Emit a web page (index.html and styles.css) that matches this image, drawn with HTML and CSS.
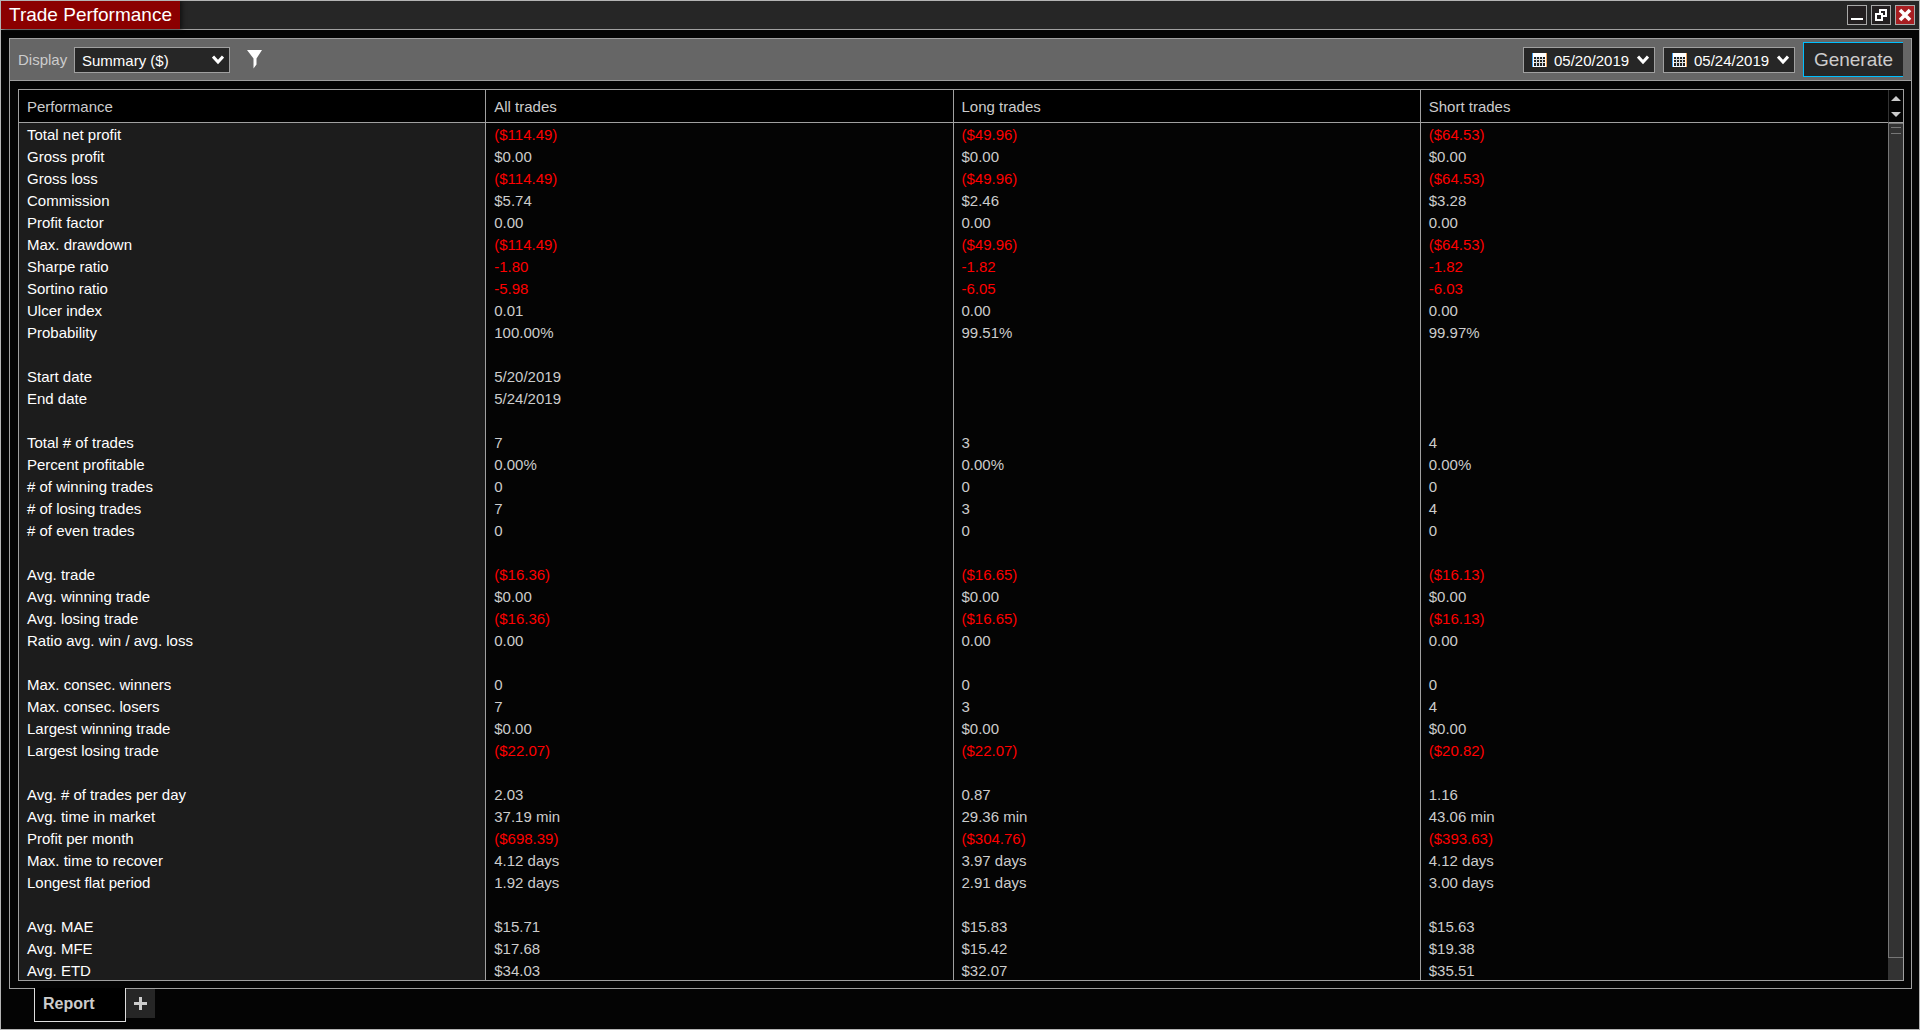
FILE: index.html
```html
<!DOCTYPE html>
<html lang="en">
<head>
  <meta charset="UTF-8">
  <title>Trade Performance</title>
  <link rel="stylesheet" href="styles.css">
</head>
<body>

<header class="titlebar">
  <h1>Trade Performance</h1>
  <div class="window-buttons">
    <button type="button" aria-label="Minimize">
      <svg width="18" height="18" viewBox="0 0 18 18"><rect x="3" y="12" width="12" height="2" fill="#fff"/></svg>
    </button>
    <button type="button" aria-label="Restore">
      <svg width="18" height="18" viewBox="0 0 18 18" fill="none" stroke="#fff" stroke-width="2"><path d="M8 7V4h6v6h-3" /><rect x="4" y="8" width="6" height="6"/></svg>
    </button>
    <button type="button" class="close" aria-label="Close">
      <svg width="18" height="18" viewBox="0 0 18 18" stroke="#fff" stroke-width="3.6"><path d="M4 4l10 10M14 4L4 14"/></svg>
    </button>
  </div>
</header>

<main class="panel">
  <div class="toolbar">
    <label for="display">Display</label>
    <div class="dropdown display">
      <select id="display">
        <option>Summary ($)</option>
      </select>
      <svg class="chevron" width="12" height="10" viewBox="0 0 12 10"><path d="M1 1.500L6 7L11 1.500" fill="none" stroke="#fff" stroke-width="3"/></svg>
    </div>
    <button type="button" class="filter" aria-label="Filter">
      <svg width="16" height="19" viewBox="0 0 16 19"><path d="M0 0h15L9.500 8.500v6L6.500 18.500v-10z" fill="#fff"/></svg>
    </button>

    <div class="dates">
      <div class="dropdown date">
        <svg class="calendar" width="15" height="14" viewBox="0 0 15 14">
          <path d="M0 0h15v14H0z" fill="#fff"/>
          <path d="M.5 0v14" stroke="#3b9cf0"/><path d="M14.500 0v14" stroke="#f0a050"/>
          <path d="M2 4h11v9H2z" fill="#222"/>
          <path d="M2 6.500h11M2 9.500h11" stroke="#f4e6cc"/>
          <path d="M4.500 4v9M7.500 4v9M10.500 4v9" stroke="#cfe0f4"/>
        </svg>
        <select aria-label="Start date">
          <option>05/20/2019</option>
        </select>
        <svg class="chevron" width="12" height="10" viewBox="0 0 12 10"><path d="M1 1.500L6 7L11 1.500" fill="none" stroke="#fff" stroke-width="3"/></svg>
      </div>
      <div class="dropdown date">
        <svg class="calendar" width="15" height="14" viewBox="0 0 15 14">
          <path d="M0 0h15v14H0z" fill="#fff"/>
          <path d="M.5 0v14" stroke="#3b9cf0"/><path d="M14.500 0v14" stroke="#f0a050"/>
          <path d="M2 4h11v9H2z" fill="#222"/>
          <path d="M2 6.500h11M2 9.500h11" stroke="#f4e6cc"/>
          <path d="M4.500 4v9M7.500 4v9M10.500 4v9" stroke="#cfe0f4"/>
        </svg>
        <select aria-label="End date">
          <option>05/24/2019</option>
        </select>
        <svg class="chevron" width="12" height="10" viewBox="0 0 12 10"><path d="M1 1.500L6 7L11 1.500" fill="none" stroke="#fff" stroke-width="3"/></svg>
      </div>
      <button type="button" class="generate">Generate</button>
    </div>
  </div>

  <div class="report">
    <div class="grid">
      <table>
        <thead>
          <tr><th>Performance</th><th>All trades</th><th>Long trades</th><th>Short trades</th></tr>
        </thead>
        <tbody>
          <tr><td>Total net profit</td><td class="neg">($114.49)</td><td class="neg">($49.96)</td><td class="neg">($64.53)</td></tr>
          <tr><td>Gross profit</td><td>$0.00</td><td>$0.00</td><td>$0.00</td></tr>
          <tr><td>Gross loss</td><td class="neg">($114.49)</td><td class="neg">($49.96)</td><td class="neg">($64.53)</td></tr>
          <tr><td>Commission</td><td>$5.74</td><td>$2.46</td><td>$3.28</td></tr>
          <tr><td>Profit factor</td><td>0.00</td><td>0.00</td><td>0.00</td></tr>
          <tr><td>Max. drawdown</td><td class="neg">($114.49)</td><td class="neg">($49.96)</td><td class="neg">($64.53)</td></tr>
          <tr><td>Sharpe ratio</td><td class="neg">-1.80</td><td class="neg">-1.82</td><td class="neg">-1.82</td></tr>
          <tr><td>Sortino ratio</td><td class="neg">-5.98</td><td class="neg">-6.05</td><td class="neg">-6.03</td></tr>
          <tr><td>Ulcer index</td><td>0.01</td><td>0.00</td><td>0.00</td></tr>
          <tr><td>Probability</td><td>100.00%</td><td>99.51%</td><td>99.97%</td></tr>
          <tr><td></td><td></td><td></td><td></td></tr>
          <tr><td>Start date</td><td>5/20/2019</td><td></td><td></td></tr>
          <tr><td>End date</td><td>5/24/2019</td><td></td><td></td></tr>
          <tr><td></td><td></td><td></td><td></td></tr>
          <tr><td>Total # of trades</td><td>7</td><td>3</td><td>4</td></tr>
          <tr><td>Percent profitable</td><td>0.00%</td><td>0.00%</td><td>0.00%</td></tr>
          <tr><td># of winning trades</td><td>0</td><td>0</td><td>0</td></tr>
          <tr><td># of losing trades</td><td>7</td><td>3</td><td>4</td></tr>
          <tr><td># of even trades</td><td>0</td><td>0</td><td>0</td></tr>
          <tr><td></td><td></td><td></td><td></td></tr>
          <tr><td>Avg. trade</td><td class="neg">($16.36)</td><td class="neg">($16.65)</td><td class="neg">($16.13)</td></tr>
          <tr><td>Avg. winning trade</td><td>$0.00</td><td>$0.00</td><td>$0.00</td></tr>
          <tr><td>Avg. losing trade</td><td class="neg">($16.36)</td><td class="neg">($16.65)</td><td class="neg">($16.13)</td></tr>
          <tr><td>Ratio avg. win / avg. loss</td><td>0.00</td><td>0.00</td><td>0.00</td></tr>
          <tr><td></td><td></td><td></td><td></td></tr>
          <tr><td>Max. consec. winners</td><td>0</td><td>0</td><td>0</td></tr>
          <tr><td>Max. consec. losers</td><td>7</td><td>3</td><td>4</td></tr>
          <tr><td>Largest winning trade</td><td>$0.00</td><td>$0.00</td><td>$0.00</td></tr>
          <tr><td>Largest losing trade</td><td class="neg">($22.07)</td><td class="neg">($22.07)</td><td class="neg">($20.82)</td></tr>
          <tr><td></td><td></td><td></td><td></td></tr>
          <tr><td>Avg. # of trades per day</td><td>2.03</td><td>0.87</td><td>1.16</td></tr>
          <tr><td>Avg. time in market</td><td>37.19 min</td><td>29.36 min</td><td>43.06 min</td></tr>
          <tr><td>Profit per month</td><td class="neg">($698.39)</td><td class="neg">($304.76)</td><td class="neg">($393.63)</td></tr>
          <tr><td>Max. time to recover</td><td>4.12 days</td><td>3.97 days</td><td>4.12 days</td></tr>
          <tr><td>Longest flat period</td><td>1.92 days</td><td>2.91 days</td><td>3.00 days</td></tr>
          <tr><td></td><td></td><td></td><td></td></tr>
          <tr><td>Avg. MAE</td><td>$15.71</td><td>$15.83</td><td>$15.63</td></tr>
          <tr><td>Avg. MFE</td><td>$17.68</td><td>$15.42</td><td>$19.38</td></tr>
          <tr><td>Avg. ETD</td><td>$34.03</td><td>$32.07</td><td>$35.51</td></tr>
        </tbody>
      </table>
    </div>
    <div class="scrollbar">
      <div class="scroll-arrows">
        <svg width="10" height="5" viewBox="0 0 10 5"><path d="M5 0l5 5H0z" fill="#ccc"/></svg>
        <svg width="10" height="5" viewBox="0 0 10 5"><path d="M0 0h10L5 5z" fill="#ccc"/></svg>
      </div>
      <div class="track">
        <div class="thumb"></div>
      </div>
    </div>
  </div>
</main>

<nav class="tabs">
  <a href="#" class="tab">Report</a>
  <button type="button" class="add-tab" aria-label="Add tab">
    <svg width="13" height="13" viewBox="0 0 13 13"><path d="M6.500 0v13M0 6.500h13" stroke="#ccc" stroke-width="3"/></svg>
  </button>
</nav>

</body>
</html>
```
FILE: styles.css
```css
* { box-sizing: border-box; }
body {
  margin: 0;
  height: 100vh;
  display: flex;
  flex-direction: column;
  overflow: hidden;
  background: #040404;
  border: 1px solid #b4b4b4;
  color: #ccc;
  font-family: "Liberation Sans", Arial, sans-serif;
  font-size: 15px;
}
button, select {
  font-family: inherit;
  font-size: inherit;
  color: inherit;
  margin: 0;
  padding: 0;
  border: none;
  border-radius: 0;
  background: none;
}
svg { display: block; }

/* title bar */
.titlebar {
  display: flex;
  justify-content: space-between;
  height: 29px;
  flex: none;
  background: #262626;
  border-bottom: 1px solid #a0a0a0;
}
h1 {
  margin: 0;
  padding: 0 8px;
  width: 179px;
  line-height: 28px;
  font-size: 19px;
  font-weight: normal;
  color: #fff;
  background: #8b0000;
  box-shadow: 2px 0 4px #111;
  white-space: nowrap;
}
.window-buttons {
  display: flex;
  gap: 4px;
  padding: 4px 4px 0 0;
}
.window-buttons button {
  width: 20px;
  height: 20px;
  border: 1px solid #a8a8a8;
  background: #231f20;
}
.window-buttons .close { background: #a81e22; }

/* panel */
.panel {
  flex: 1;
  min-height: 0;
  display: flex;
  flex-direction: column;
  margin: 8px 7px 0 8px;
  border: 1px solid #a0a0a0;
}
.toolbar {
  display: flex;
  align-items: center;
  height: 42px;
  flex: none;
  padding: 0 8px;
  background: #666;
  border-bottom: 1px solid #a0a0a0;
}
.toolbar label { width: 56px; }
.dropdown {
  position: relative;
  height: 26px;
}
.dropdown select {
  appearance: none;
  width: 100%;
  height: 100%;
  padding-top: 2px;
  padding-left: 7px;
  color: #fff;
  background: #262626;
  border: 1px solid #a0a0a0;
}
.display { width: 156px; }
.date { width: 132px; }
.date select { padding-left: 30px; }
.chevron {
  position: absolute;
  right: 6px;
  top: 8px;
  pointer-events: none;
}
.calendar {
  position: absolute;
  left: 9px;
  top: 6px;
  pointer-events: none;
}
.filter { margin-left: 17px; }
.dates {
  display: flex;
  align-items: center;
  gap: 8px;
  margin-left: auto;
}
.generate {
  width: 100px;
  height: 35px;
  font-size: 19px;
  background: #262626;
  border: 1px solid #00bfff;
  border-right: none;
}

/* report table */
.report {
  flex: 1;
  min-height: 0;
  display: flex;
  margin: 8px 7px 7px 8px;
  border: 1px solid #a0a0a0;
}
.grid {
  flex: 1;
  overflow: hidden;
}
table {
  width: 100%;
  table-layout: fixed;
  border-collapse: separate;
  border-spacing: 0;
}
th, td {
  padding: 0 8px;
  text-align: left;
  font-weight: normal;
  white-space: nowrap;
  border-right: 1px solid #a0a0a0;
}
th {
  height: 33px;
  background: #000;
  border-bottom: 1px solid #a0a0a0;
}
td {
  height: 22px;
  padding-top: 2px;
  line-height: 20px;
}
th:last-child, td:last-child { border-right: none; }
td:first-child {
  color: #fff;
  background: #1c1c1c;
}
.neg { color: #f00; }

/* scrollbar */
.scrollbar {
  width: 15px;
  display: flex;
  flex-direction: column;
}
.scroll-arrows {
  height: 33px;
  display: flex;
  flex-direction: column;
  align-items: center;
  justify-content: space-between;
  padding: 6px 0 5px;
  border-left: 1px solid #333;
  border-bottom: 1px solid #a0a0a0;
}
.track {
  flex: 1;
  display: flex;
  flex-direction: column;
  padding-bottom: 22px;
  background: #333;
}
.thumb {
  flex: 1;
  border: 1px solid #777;
  border-right: none;
}
.thumb::before {
  content: "";
  display: block;
  width: 10px;
  height: 5px;
  margin: 3px auto;
  border-top: 1px solid #777;
  border-bottom: 1px solid #777;
}

/* tabs */
.tabs {
  display: flex;
  align-items: flex-start;
  height: 40px;
  flex: none;
  padding-left: 33px;
}
.tab {
  z-index: 1;
  width: 92px;
  height: 34px;
  margin-top: -1px;
  padding-left: 8px;
  line-height: 32px;
  font-size: 16px;
  font-weight: bold;
  color: #ccc;
  text-decoration: none;
  background: #000;
  border: 1px solid #ddd;
  border-top: none;
}
.add-tab {
  display: flex;
  align-items: center;
  justify-content: center;
  width: 29px;
  height: 29px;
  background: #262626;
}
```
